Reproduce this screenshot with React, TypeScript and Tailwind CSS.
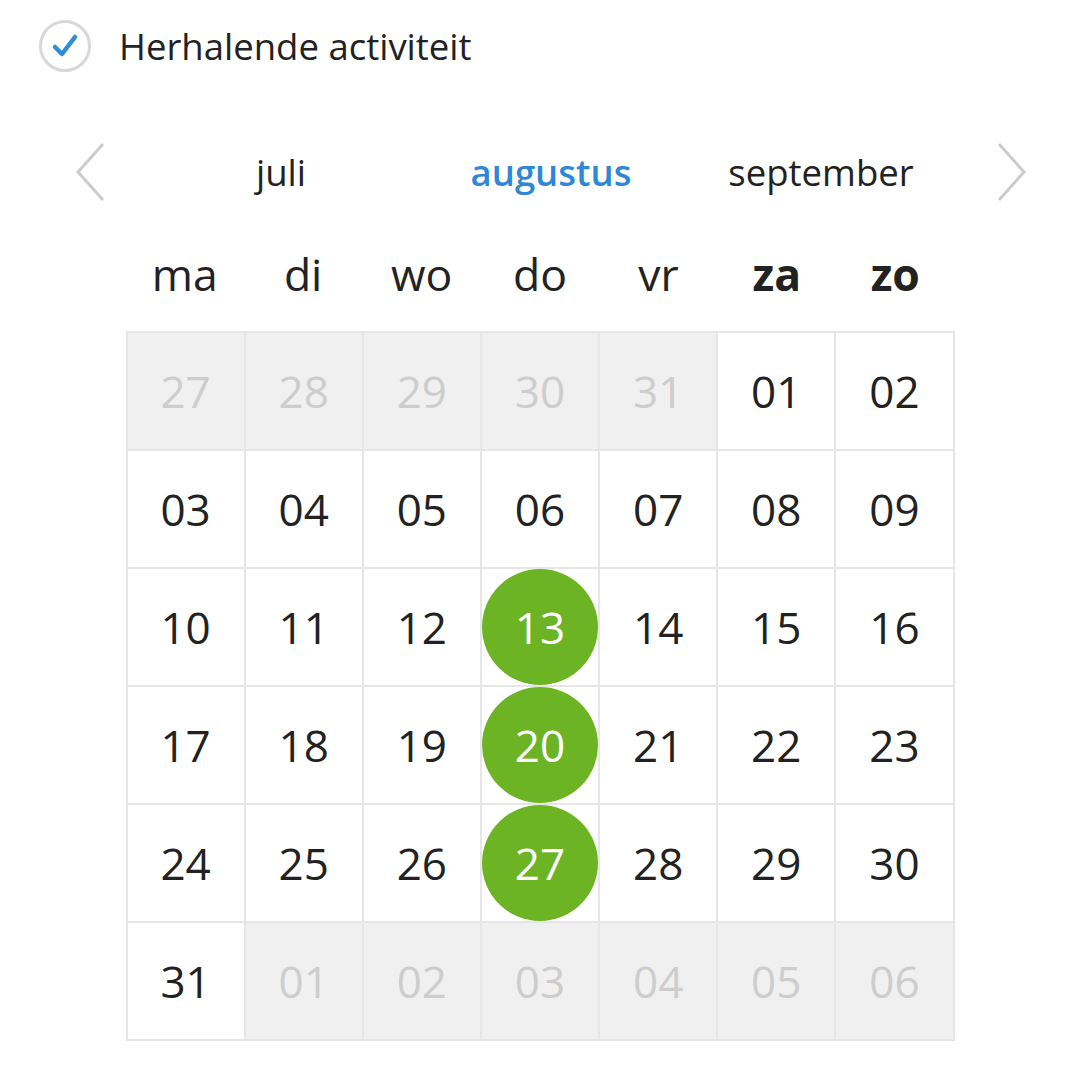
import React from "react";

const font = { fontFamily: '"Open Sans", "Noto Sans", sans-serif' };

type Cell = { d: string; muted?: boolean; hit?: boolean };

const rows: Cell[][] = [
  [
    { d: "27", muted: true },
    { d: "28", muted: true },
    { d: "29", muted: true },
    { d: "30", muted: true },
    { d: "31", muted: true },
    { d: "01" },
    { d: "02" },
  ],
  ["03", "04", "05", "06", "07", "08", "09"].map((d) => ({ d })),
  [
    { d: "10" },
    { d: "11" },
    { d: "12" },
    { d: "13", hit: true },
    { d: "14" },
    { d: "15" },
    { d: "16" },
  ],
  [
    { d: "17" },
    { d: "18" },
    { d: "19" },
    { d: "20", hit: true },
    { d: "21" },
    { d: "22" },
    { d: "23" },
  ],
  [
    { d: "24" },
    { d: "25" },
    { d: "26" },
    { d: "27", hit: true },
    { d: "28" },
    { d: "29" },
    { d: "30" },
  ],
  [
    { d: "31" },
    { d: "01", muted: true },
    { d: "02", muted: true },
    { d: "03", muted: true },
    { d: "04", muted: true },
    { d: "05", muted: true },
    { d: "06", muted: true },
  ],
];

const days = ["ma", "di", "wo", "do", "vr", "za", "zo"];

export default function App() {
  return (
    <div className="w-[1080px] h-[1069px] bg-white text-[#222]" style={font}>
      <div className="flex items-center pt-[20px] pl-[39px] h-[72px]">
        <div className="w-[52px] h-[52px] rounded-full border-[3px] border-[#d8d8d8] flex items-center justify-center">
          <svg width="30" height="26" viewBox="0 0 30 26">
            <path d="M5 14 L12 21 L25 4" fill="none" stroke="#2f8cd8" strokeWidth="4.5" strokeLinecap="round" strokeLinejoin="round" />
          </svg>
        </div>
        <span className="ml-[28px] text-[36.5px] leading-none">Herhalende activiteit</span>
      </div>

      <div className="flex items-center mt-[70px] pl-[74px] pr-[52px] h-[60px]">
        <svg width="32" height="60" viewBox="0 0 32 60">
          <path d="M29 2 L4 30 L29 58" fill="none" stroke="#cccccc" strokeWidth="3" />
        </svg>
        <div className="flex-1 grid grid-cols-3 text-[36.5px] leading-none pl-[40px] pr-[40px]">
          <div className="text-center">juli</div>
          <div className="text-center font-semibold text-[#2f87d6]">augustus</div>
          <div className="text-center">september</div>
        </div>
        <svg width="32" height="60" viewBox="0 0 32 60">
          <path d="M3 2 L28 30 L3 58" fill="none" stroke="#cccccc" strokeWidth="3" />
        </svg>
      </div>

      <div className="w-[829px] mx-auto">
        <div className="grid grid-cols-7 h-[129px] pt-[16px] items-center text-[44.5px] leading-none">
          {days.map((d, i) => (
            <div key={d} className={"text-center " + (i >= 5 ? "font-bold" : "")}>
              {d}
            </div>
          ))}
        </div>
        <div className="grid grid-cols-7 gap-[2px] p-[2px] bg-[#e6e6e6]">
          {rows.flat().map((c, i) => (
            <div
              key={i}
              className={
                "h-[116px] flex items-center justify-center text-[44px] " +
                (c.muted ? "bg-[#f0f0f0] text-[#cdcdcd]" : "bg-white")
              }
            >
              {c.hit ? (
                <div className="w-[116px] h-[116px] rounded-full bg-[#6db425] text-white flex items-center justify-center">
                  {c.d}
                </div>
              ) : (
                c.d
              )}
            </div>
          ))}
        </div>
      </div>
    </div>
  );
}
